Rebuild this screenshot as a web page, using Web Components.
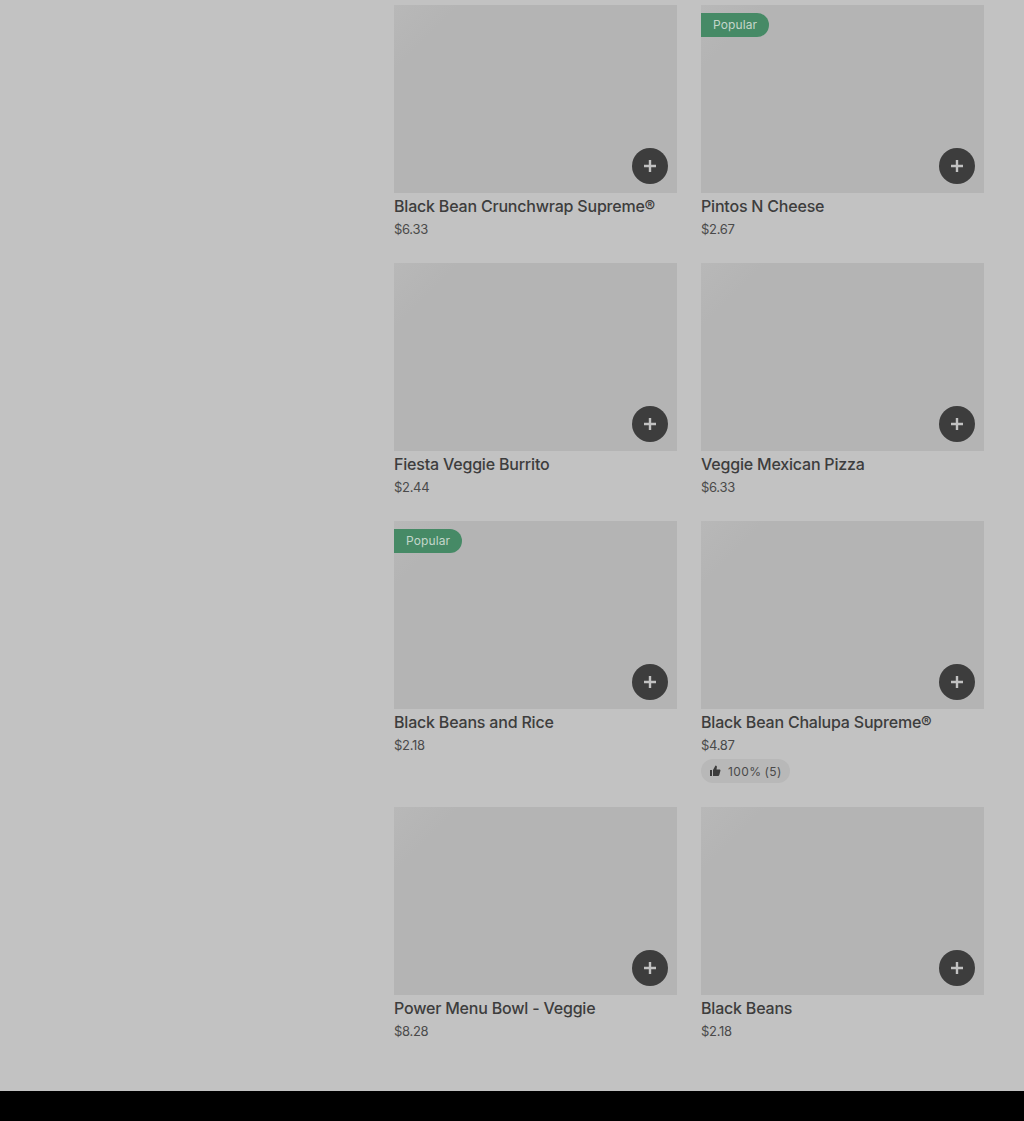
<!DOCTYPE html>
<html>
<head>
<meta charset="utf-8">
<title>Menu</title>
<style>
html, body { margin: 0; padding: 0; background: #c2c2c2; }
body { font-family: Inter, "Liberation Sans", sans-serif; color: #3d3d3d; }
</style>
</head>
<body>
<menu-page>
    <menu-item name="Black Bean Crunchwrap Supreme®" price="$6.33"></menu-item>
    <menu-item name="Pintos N Cheese" price="$2.67" popular></menu-item>
    <menu-item name="Fiesta Veggie Burrito" price="$2.44"></menu-item>
    <menu-item name="Veggie Mexican Pizza" price="$6.33"></menu-item>
    <menu-item name="Black Beans and Rice" price="$2.18" popular></menu-item>
    <menu-item name="Black Bean Chalupa Supreme®" price="$4.87" rating="100% (5)"></menu-item>
    <menu-item name="Power Menu Bowl - Veggie" price="$8.28"></menu-item>
    <menu-item name="Black Beans" price="$2.18"></menu-item>
</menu-page>
<script>
customElements.define("menu-page", class MenuPage extends HTMLElement{
    constructor(){
        super()
        this.shadow = this.attachShadow({mode: "open"})
        this.shadow.innerHTML = `
            <style>
            :host { display: block; }
            .layout {
                display: grid;
                grid-template-columns: 394px 1fr;
            }
            .grid {
                display: grid;
                grid-template-columns: 283px 283px;
                gap: 24px;
                padding: 5px 0 50px;
            }
            .footer {
                height: 30px;
                background: #000;
            }
            </style>
            <div class="layout">
                <div class="side"></div>
                <div class="grid"><slot></slot></div>
            </div>
            <div class="footer"></div>
        `
    }
})

customElements.define("menu-item", class MenuItem extends HTMLElement{
    constructor(){
        super()
        this.shadow = this.attachShadow({mode: "open"})
        const popular = this.hasAttribute("popular")
            ? `<span class="badge">Popular</span>` : ""
        const rating = this.getAttribute("rating")
            ? `<div class="rating">
                    <svg class="thumb" viewBox="0 0 24 24" fill="currentColor">
                        <path d="M2 10h4v12H2zM8 22V10l5-9 1.5.6c1 .5 1.5 1.5 1.3 2.6L15 9h6c1 0 2 1 2 2.2L20.5 20c-.3 1.2-1.2 2-2.4 2z"></path>
                    </svg>
                    <span>${this.getAttribute("rating")}</span>
               </div>` : ""
        this.shadow.innerHTML = `
            <style>
            :host { display: block; }
            .photo {
                position: relative;
                height: 188px;
                background: linear-gradient(135deg, #b8b8b8 0, #b4b4b4 14%, #b4b4b4 100%);
            }
            .badge {
                position: absolute;
                top: 8px;
                left: 0;
                height: 24px;
                line-height: 24px;
                padding: 0 12px;
                font-size: 12px;
                letter-spacing: .1px;
                color: #c4d6cb;
                background: #468a66;
                border-radius: 0 12px 12px 0;
            }
            .add {
                position: absolute;
                right: 9px;
                bottom: 9px;
                width: 36px;
                height: 36px;
                border-radius: 50%;
                background: #3d3d3d;
                display: flex;
                align-items: center;
                justify-content: center;
            }
            .add svg { width: 12px; height: 12px; }
            .name {
                margin-top: 1px;
                font-size: 16px;
                line-height: 24px;
                font-weight: 500;
                letter-spacing: -.2px;
                color: #3d3d3d;
            }
            .price {
                margin-top: 1px;
                font-size: 13px;
                line-height: 20px;
                letter-spacing: -.3px;
                color: #4a4a4a;
            }
            .rating {
                display: inline-flex;
                align-items: center;
                gap: 7px;
                margin-top: 4px;
                height: 24px;
                padding: 0 8px;
                font-size: 12px;
                letter-spacing: .45px;
                word-spacing: -1px;
                color: #4a4a4a;
                background: #b8b8b8;
                border-radius: 12px;
            }
            .thumb { width: 12px; height: 12px; color: #3d3d3d; }
            </style>
            <div class="photo">
                ${popular}
                <div class="add">
                    <svg viewBox="0 0 12 12"><path d="M4.8 0h2.4v4.8H12v2.4H7.2V12H4.8V7.2H0V4.8h4.8z" fill="#c2c2c2"></path></svg>
                </div>
            </div>
            <div class="name">${this.getAttribute("name")}</div>
            <div class="price">${this.getAttribute("price")}</div>
            ${rating}
        `
    }
})
</script>
</body>
</html>
